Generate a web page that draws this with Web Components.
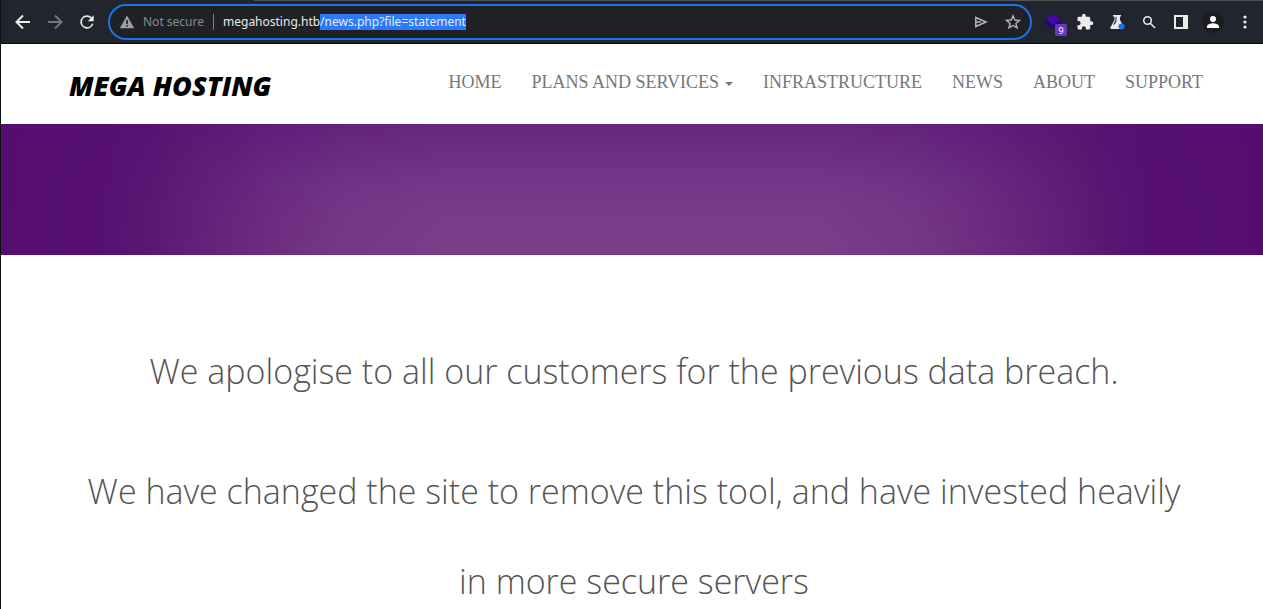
<!DOCTYPE html>
<html lang="en">
<head>
<meta charset="utf-8">
<title>Mega Hosting</title>
<style>
body { margin: 0; background: #fff; }
</style>
</head>
<body>
<browser-frame>
  <browser-toolbar slot="toolbar"></browser-toolbar>
  <site-header>
    <nav-link href="#home">HOME</nav-link>
    <nav-link href="#plans" caret>PLANS AND SERVICES</nav-link>
    <nav-link href="#infrastructure">INFRASTRUCTURE</nav-link>
    <nav-link href="#news">NEWS</nav-link>
    <nav-link href="#about">ABOUT</nav-link>
    <nav-link href="#support">SUPPORT</nav-link>
  </site-header>
  <hero-banner></hero-banner>
  <news-statement>
    <news-line>We apologise to all our customers for the previous data breach.</news-line>
    <news-line>We have changed the site to remove this tool, and have invested heavily in more secure servers</news-line>
  </news-statement>
</browser-frame>

<script>
class Base extends HTMLElement {
  constructor() {
    super();
    this.attachShadow({ mode: 'open' }).innerHTML = this.constructor.markup;
  }
}

class BrowserFrame extends Base {
  static markup = `
    <style>
      :host { display: flex; flex-direction: column; height: 100vh; box-sizing: border-box;
        border-left: 1px solid #0e0f13; overflow: hidden; }
      main { flex: 1; min-height: 0; overflow: hidden; background: #fff; }
    </style>
    <slot name="toolbar"></slot>
    <main><slot></slot></main>`;
}

class ToolButton extends Base {
  static markup = `
    <style>
      :host { display: block; flex: none; }
      button { display: flex; align-items: center; justify-content: center; width: 32px; height: 32px;
        margin: 0; padding: 0; border: 0; border-radius: 16px; background: none; color: #ececec; }
      :host([dim]) button { color: #75777b; }
      :host([soft]) button { color: #b4b6b9; }
    </style>
    <button type="button"><slot></slot></button>`;
  connectedCallback() {
    this.shadowRoot.querySelector('button').setAttribute('aria-label', this.getAttribute('name'));
  }
}

class BrowserToolbar extends Base {
  static markup = `
    <style>
      :host { display: flex; flex: none; align-items: center; height: 44px; box-sizing: border-box;
        padding: 1px 2px 1px 6px; gap: 5px; border-bottom: 1px solid #08080c;
        background: linear-gradient(to right, #23252e 253px, #505256 253px) top / 100% 1px no-repeat, #23252e; }
      .group { display: flex; }
      svg { display: block; }
      address-bar { flex: 1; }
      .ext { position: relative; display: block; width: 18px; height: 18px; }
      .badge { position: absolute; left: 11px; top: 11px; width: 12px; height: 12px; border-radius: 2px;
        background: #673ab7; color: #fff; font: 9px/13px "Noto Sans", sans-serif; text-align: center; }
    </style>
    <div class="group">
      <tool-button name="Back"><svg width="18" height="18" viewBox="0 0 18 18" fill="none" stroke="currentColor" stroke-width="2"><path d="M16 9H3M9 2.500L2.500 9L9 15.500"/></svg></tool-button>
      <tool-button name="Forward" dim><svg width="18" height="18" viewBox="0 0 18 18" fill="none" stroke="currentColor" stroke-width="2"><path d="M2 9H15M9 2.500L15.500 9L9 15.500"/></svg></tool-button>
      <tool-button name="Reload"><svg width="20" height="20" viewBox="0 0 24 24" fill="currentColor"><path d="M17.65 6.350A8 8 0 1 0 19.730 14h-2.080A6 6 0 1 1 12 6c1.660 0 3.140.69 4.220 1.780L13 11h7V4z"/></svg></tool-button>
    </div>
    <address-bar></address-bar>
    <div class="group">
      <tool-button name="Layers extension"><span class="ext"><svg width="18" height="18" viewBox="0 0 18 18"><path d="M1 6.500v4.500l8 5 8-5V6.500z" fill="#22096c"/><path d="M9 1l8 5-8 6-8-6z" fill="#4407a8"/></svg><span class="badge">9</span></span></tool-button>
      <tool-button name="Extensions"><svg width="18" height="18" viewBox="0 0 24 24" fill="currentColor"><path d="M20.500 11H19V7c0-1.100-.9-2-2-2h-4V3.500a2.500 2.500 0 0 0-5 0V5H4c-1.100 0-2 .9-2 2v3.800h1.500a2.700 2.700 0 0 1 0 5.400H2V20c0 1.100.9 2 2 2h3.800v-1.500a2.700 2.700 0 0 1 5.400 0V22H17c1.100 0 2-.9 2-2v-4h1.500a2.500 2.500 0 0 0 0-5z"/></svg></tool-button>
      <tool-button name="Labs"><svg width="16" height="16" viewBox="0 0 16 16"><path d="M4 1h8v1.500h-1V6L15 13.500Q15 15 13.500 15h-11Q1 15 1.300 13.500L5.500 6V2.500H4z" fill="#e8eaed"/><path d="M6.500 6.500V3H7.500v4L6 10l-2 1z" fill="#23252e"/><circle cx="12.500" cy="12.500" r="3" fill="#1a73e8"/></svg></tool-button>
      <tool-button name="Search"><svg width="14" height="14" viewBox="0 0 14 14" fill="none" stroke="currentColor" stroke-width="1.500"><circle cx="5.500" cy="5.500" r="3.800"/><path d="M8.300 8.300L13 13"/></svg></tool-button>
      <tool-button name="Side panel"><svg width="14" height="14" viewBox="0 0 14 14" fill="currentColor" fill-rule="evenodd"><path d="M0 0h14v14H0zM2 2v10h7V2z"/></svg></tool-button>
      <tool-button name="Profile"><svg width="22" height="22" viewBox="0 0 22 22"><circle cx="11" cy="11" r="11" fill="#1c1d20"/><circle cx="11" cy="8" r="3" fill="#fff"/><path d="M5 17v-1.500C5 13.300 9 12.300 11 12.300s6 1 6 3.200V17z" fill="#fff"/></svg></tool-button>
      <tool-button name="Menu"><svg width="4" height="14" viewBox="0 0 4 14" fill="currentColor"><circle cx="2" cy="2" r="1.600"/><circle cx="2" cy="7" r="1.600"/><circle cx="2" cy="12" r="1.600"/></svg></tool-button>
    </div>`;
}

class AddressBar extends Base {
  static markup = `
    <style>
      :host { display: flex; align-items: center; height: 36px; box-sizing: border-box; min-width: 0;
        padding: 0 1px 0 9px; border: 2px solid #1a73e8; border-radius: 18px; background: #202124;
        font: 12px/16px "Noto Sans", sans-serif; }
      svg { display: block; flex: none; }
      label { margin-left: 8px; color: #898c90; white-space: nowrap; }
      i { flex: none; width: 1px; height: 16px; margin: 0 9px; background: #7d8084; }
      input { flex: 1; min-width: 0; height: 16px; padding: 0; border: 0; outline: 0; background: none;
        color: #e8eaed; font: inherit; caret-color: transparent; }
      input::selection { background: #2a79ff; color: #e8eaed; }
    </style>
    <svg width="16" height="14" viewBox="0 0 16 14"><path d="M8 .5L15.200 13.300H.8z" fill="#9aa0a6"/><path d="M7.200 5h1.600v4H7.200zM7.200 10h1.600v1.600H7.200z" fill="#202124"/></svg>
    <label for="url">Not secure</label><i></i>
    <input id="url" type="text" spellcheck="false" value="megahosting.htb/news.php?file=statement">
    <tool-button name="Share" soft><svg width="14" height="12" viewBox="0 0 14 12" fill="none" stroke="currentColor" stroke-width="1.500"><path d="M1.800 1.500L12 6L1.800 10.500zM2 6h5"/></svg></tool-button>
    <tool-button name="Bookmark" soft><svg width="16" height="16" viewBox="0 0 16 16" fill="none" stroke="currentColor" stroke-width="1.400"><path d="M8 1.800L9.800 6l4.600.4-3.500 3 1.100 4.500L8 11.500l-4 2.400 1.100-4.500-3.500-3L6.200 6z"/></svg></tool-button>`;
  connectedCallback() {
    const input = this.shadowRoot.querySelector('input');
    input.focus();
    input.setSelectionRange(input.value.indexOf('/'), input.value.length);
  }
}

class SiteHeader extends Base {
  static markup = `
    <style>
      :host { display: block; background: #fff; }
      header { display: flex; align-items: center; justify-content: space-between; box-sizing: border-box;
        max-width: 1170px; height: 80px; margin: 0 auto; padding: 0 14px 0 22px; }
      .brand { padding-top: 4px; color: #000; text-decoration: none; white-space: nowrap;
        font: italic 800 27px/34px "Open Sans", sans-serif; }
      nav { display: flex; gap: 30px; padding-bottom: 4px; }
    </style>
    <header>
      <a class="brand" href="#top">MEGA HOSTING</a>
      <nav><slot></slot></nav>
    </header>`;
}

class NavLink extends Base {
  static markup = `
    <style>
      :host { display: block; }
      a { display: flex; align-items: center; gap: 6px; color: #777; text-decoration: none; white-space: nowrap;
        font: 18px/20px "Liberation Serif", serif; }
      b { display: none; width: 0; border: 4px solid transparent; border-top-color: #777; border-bottom: 0; margin-top: 4px; }
      :host([caret]) b { display: block; }
    </style>
    <a><slot></slot><b></b></a>`;
  connectedCallback() {
    this.shadowRoot.querySelector('a').href = this.getAttribute('href');
  }
}

class HeroBanner extends Base {
  static markup = `
    <style>
      :host { display: block; height: 131px; background-color: #550e6f;
        background-image:
          linear-gradient(to right, #550e6f 0%, #550e6ff4 8%, #550e6fcc 12%, #550e6f8c 17%, #550e6f50 22%, #550e6f22 27%, #550e6f00 35%,
            #550e6f00 65%, #550e6f22 72%, #550e6f50 77%, #550e6f8c 82%, #550e6fcc 87%, #550e6ff4 91%, #550e6f 100%),
          linear-gradient(to bottom, #65277b 0%, #6e3085 28%, #733789 45%, #783b88 65%, #7a3e89 100%); }
    </style>`;
}

class NewsStatement extends Base {
  static markup = `
    <style>
      :host { display: block; max-width: 1110px; margin: 0 auto; padding: 71px 0 0 4px; }
    </style>
    <slot></slot>`;
}

class NewsLine extends Base {
  static markup = `
    <style>
      :host { display: block; margin-bottom: 30px; }
      h1 { margin: 0; color: #555; text-align: center; font: 300 34px/90px "Open Sans", sans-serif; }
    </style>
    <h1><slot></slot></h1>`;
}

customElements.define('tool-button', ToolButton);
customElements.define('address-bar', AddressBar);
customElements.define('browser-toolbar', BrowserToolbar);
customElements.define('nav-link', NavLink);
customElements.define('site-header', SiteHeader);
customElements.define('hero-banner', HeroBanner);
customElements.define('news-line', NewsLine);
customElements.define('news-statement', NewsStatement);
customElements.define('browser-frame', BrowserFrame);
</script>
</body>
</html>
